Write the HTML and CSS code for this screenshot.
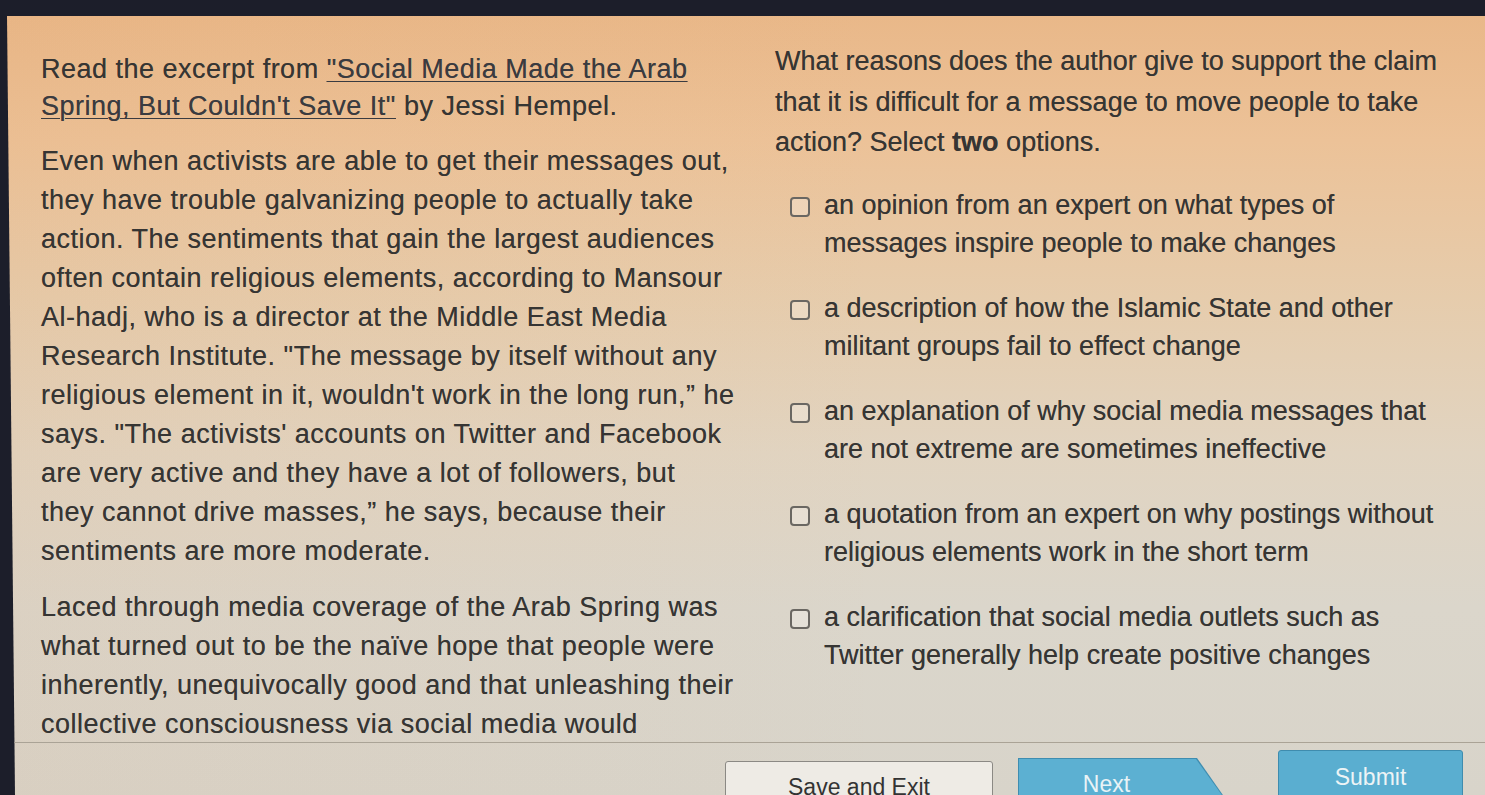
FILE: index.html
```html
<!DOCTYPE html>
<html lang="en">
<head>
<meta charset="utf-8">
<title>Reading question</title>
<link rel="stylesheet" href="styles.css">
</head>
<body>
<div class="screen">
  <div class="content">
    <div class="passage">
      <p class="intro">Read the excerpt from <a class="title-link" href="#">"Social Media Made the Arab<br>Spring, But Couldn't Save It"</a> by Jessi Hempel.</p>
      <p>Even when activists are able to get their messages out,<br>they have trouble galvanizing people to actually take<br>action. The sentiments that gain the largest audiences<br>often contain religious elements, according to Mansour<br>Al-hadj, who is a director at the Middle East Media<br>Research Institute. "The message by itself without any<br>religious element in it, wouldn't work in the long run,” he<br>says. "The activists' accounts on Twitter and Facebook<br>are very active and they have a lot of followers, but<br>they cannot drive masses,” he says, because their<br>sentiments are more moderate.</p>
      <p>Laced through media coverage of the Arab Spring was<br>what turned out to be the naïve hope that people were<br>inherently, unequivocally good and that unleashing their<br>collective consciousness via social media would</p>
    </div>
    <div class="question">
      <p class="prompt">What reasons does the author give to support the claim<br>that it is difficult for a message to move people to take<br>action? Select <b>two</b> options.</p>
      <ul class="options">
        <li class="option"><span class="box"></span><span class="label">an opinion from an expert on what types of<br>messages inspire people to make changes</span></li>
        <li class="option"><span class="box"></span><span class="label">a description of how the Islamic State and other<br>militant groups fail to effect change</span></li>
        <li class="option"><span class="box"></span><span class="label">an explanation of why social media messages that<br>are not extreme are sometimes ineffective</span></li>
        <li class="option"><span class="box"></span><span class="label">a quotation from an expert on why postings without<br>religious elements work in the short term</span></li>
        <li class="option"><span class="box"></span><span class="label">a clarification that social media outlets such as<br>Twitter generally help create positive changes</span></li>
      </ul>
    </div>
  </div>
  <div class="footer">
    <button class="btn btn-save"><span class="btn-text">Save and Exit</span></button>
    <button class="btn btn-next"><span class="next-inner"><span class="btn-text">Next</span></span></button>
    <button class="btn btn-submit"><span class="btn-text">Submit</span></button>
  </div>
</div>
</body>
</html>
```

FILE: styles.css
```css
html, body {
  margin: 0;
  padding: 0;
}
body {
  width: 1485px;
  height: 795px;
  overflow: hidden;
  background: #1c1e2a;
  font-family: "Liberation Sans", Arial, sans-serif;
  color: #363533;
}
.screen {
  margin-top: 16px;
  height: 779px;
  display: flex;
  flex-direction: column;
  background:
    linear-gradient(90deg, rgba(222, 150, 90, 0.08) 0%, rgba(222, 150, 90, 0) 60%),
    linear-gradient(180deg, #e9b889 0%, #ecc298 16%, #e6ccac 36%, #e1d4c1 56%, #dbd6cb 76%, #d8d4ca 100%);
  clip-path: polygon(7px 0, 100% 0, 100% 100%, 15px 100%);
  border-top-left-radius: 6px;
}
.content {
  flex: 1 1 0;
  min-height: 0;
  display: grid;
  grid-template-columns: 734px 1fr;
  padding-left: 41px;
}
p {
  margin: 0;
}
.passage {
  padding-top: 35px;
  font-size: 27px;
  letter-spacing: 0.5px;
  line-height: 39px;
  white-space: nowrap;
  text-shadow: 0 0 0.6px rgba(40, 40, 40, 0.6);
}
.passage p + p {
  margin-top: 17px;
}
.intro {
  line-height: 37px;
}
.title-link {
  color: #3a3b40;
  text-decoration: underline;
  text-underline-offset: 3px;
  text-decoration-thickness: 1px;
}
.question {
  padding-top: 25px;
  font-size: 27px;
  line-height: 40.5px;
  white-space: nowrap;
  text-shadow: 0 0 0.6px rgba(40, 40, 40, 0.6);
}
.prompt b {
  font-weight: bold;
}
.options {
  list-style: none;
  margin: 23px 0 0 0;
  padding: 0 0 0 15px;
  display: flex;
  flex-direction: column;
  gap: 26px;
}
.option {
  display: flex;
  align-items: flex-start;
  line-height: 38.5px;
}
.box {
  flex: none;
  width: 16px;
  height: 16px;
  margin-top: 11px;
  margin-right: 14px;
  border: 2px solid #6a6762;
  border-radius: 4px;
  background: rgba(255, 255, 255, 0.25);
}
.label {
  display: block;
}
.footer {
  flex: none;
  height: 52px;
  border-top: 1px solid #aaa396;
  display: flex;
  align-items: flex-start;
  padding-left: 725px;
  overflow: hidden;
}
.btn {
  font-family: "Liberation Sans", Arial, sans-serif;
  font-size: 23px;
  line-height: 26px;
  padding: 0;
  margin: 0;
  cursor: pointer;
  flex: none;
  display: flex;
  align-items: flex-start;
  justify-content: center;
}
.btn-text {
  display: block;
}
.btn-save {
  margin-top: 18px;
  width: 268px;
  height: 70px;
  padding-top: 12px;
  background: #eeebe5;
  border: 1px solid #8b8984;
  border-radius: 3px;
  color: #333;
}
.btn-next {
  margin-top: 15px;
  margin-left: 25px;
  width: 207px;
  height: 80px;
  border: 0;
  background: #3f8db0;
  clip-path: polygon(0 0, calc(100% - 28px) 0, 100% 50%, calc(100% - 28px) 100%, 0 100%);
  padding: 1px;
  align-items: stretch;
}
.next-inner {
  flex: 1;
  display: flex;
  justify-content: center;
  align-items: flex-start;
  background: #5cb0d2;
  color: #e9f3f6;
  padding-top: 12px;
  padding-right: 30px;
  clip-path: polygon(0 0, calc(100% - 28px) 0, 100% 50%, calc(100% - 28px) 100%, 0 100%);
}
.btn-submit {
  margin-top: 7px;
  margin-left: 53px;
  width: 185px;
  height: 80px;
  padding-top: 13px;
  background: #5aaed0;
  border: 1px solid #3f8cae;
  border-radius: 3px;
  color: #edf4f6;
}
```
